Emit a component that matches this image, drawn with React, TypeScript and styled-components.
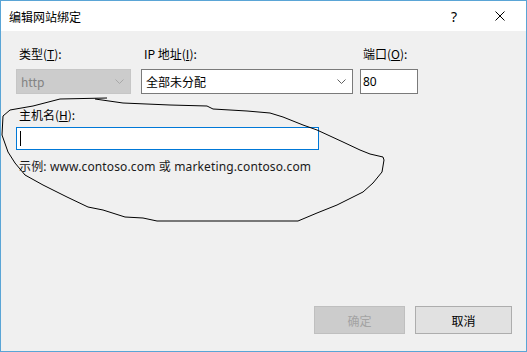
import React from "react";
import styled, { createGlobalStyle } from "styled-components";

const Global = createGlobalStyle`
  html, body { margin: 0; padding: 0; background: #ffffff; }
  body { font-family: "Noto Sans", "Noto Sans CJK SC", sans-serif; font-size: 12px; color: #000; }
`;

const Window = styled.div`
  position: relative;
  width: 527px;
  height: 352px;
  box-sizing: border-box;
  border: 1px solid #5aa5d6;
  display: flex;
  flex-direction: column;
  background: #f0f0f0;
  overflow: hidden;
`;

const TitleBar = styled.div`
  height: 30px;
  background: #ffffff;
  display: flex;
  align-items: center;
  padding-left: 8px;
  padding-right: 3px;
`;

const Title = styled.div`
  flex: 1;
  font-family: "Noto Sans CJK SC", sans-serif;
  font-size: 12px;
  color: #000;
`;

const TitleButton = styled.div<{ $w: number }>`
  width: ${(p) => p.$w}px;
  height: 30px;
  display: flex;
  align-items: center;
  justify-content: center;
  font-family: "Noto Sans", sans-serif;
  font-size: 14px;
  color: #000;
`;

const Body = styled.div`
  flex: 1;
  display: flex;
  flex-direction: column;
  padding: 15px 15px 0 15px;
`;

const FieldRow = styled.div`
  display: flex;
`;

const Field = styled.div<{ $w: number; $ml?: number }>`
  width: ${(p) => p.$w}px;
  margin-left: ${(p) => p.$ml ?? 0}px;
  display: flex;
  flex-direction: column;
`;

const Label = styled.div`
  height: 16px;
  line-height: 16px;
  padding-left: 3px;
  font-family: "Noto Sans CJK SC", sans-serif;
  font-size: 12px;
  color: #000;
  white-space: nowrap;
  margin-bottom: 7px;
`;

const Mn = styled.span`
  text-decoration: underline;
  text-underline-offset: 1px;
`;

const Select = styled.div<{ $disabled?: boolean }>`
  height: 25px;
  box-sizing: border-box;
  border: 1px solid ${(p) => (p.$disabled ? "#c6c6c6" : "#7a7a7a")};
  background: ${(p) => (p.$disabled ? "#cccccc" : "#ffffff")};
  color: ${(p) => (p.$disabled ? "#838383" : "#000")};
  display: flex;
  align-items: center;
  padding: 0 6px 0 4px;
  font-family: "Noto Sans CJK SC", sans-serif;
  font-size: 12px;
`;

const SelectText = styled.span`
  flex: 1;
`;

const TextBox = styled.div<{ $focused?: boolean; $h: number }>`
  height: ${(p) => p.$h}px;
  box-sizing: border-box;
  border: 1px solid ${(p) => (p.$focused ? "#0078d7" : "#7a7a7a")};
  background: #ffffff;
  display: flex;
  align-items: center;
  padding-left: 2px;
  font-family: "Noto Sans", sans-serif;
  font-size: 12px;
`;

const Caret = styled.div`
  width: 1px;
  height: 15px;
  background: #000;
  margin-left: 1px;
`;

const HostBlock = styled.div`
  margin-top: 13px;
  width: 303px;
  display: flex;
  flex-direction: column;
`;

const HostLabel = styled(Label)`
  margin-bottom: 4px;
`;

const Example = styled.div`
  margin-top: 9px;
  padding-left: 3px;
  height: 16px;
  line-height: 16px;
  font-family: "Noto Sans", "Noto Sans CJK SC", sans-serif;
  font-size: 12px;
  letter-spacing: 0.14px;
  color: #1a1a1a;
  white-space: nowrap;
`;

const Footer = styled.div`
  display: flex;
  justify-content: flex-end;
  gap: 10px;
  padding: 0 14px 17px 0;
`;

const Button = styled.div<{ $disabled?: boolean; $w: number }>`
  width: ${(p) => p.$w}px;
  height: 28px;
  box-sizing: border-box;
  border: 1px solid ${(p) => (p.$disabled ? "#bfbfbf" : "#adadad")};
  background: ${(p) => (p.$disabled ? "#cccccc" : "#e1e1e1")};
  color: ${(p) => (p.$disabled ? "#a3a3a3" : "#000")};
  display: flex;
  align-items: center;
  justify-content: center;
  font-family: "Noto Sans CJK SC", sans-serif;
  font-size: 12px;
`;

const Scribble = styled.svg`
  position: absolute;
  left: -1px;
  top: -1px;
  pointer-events: none;
`;

const Chevron = ({ color }: { color: string }) => (
  <svg width="9" height="5" viewBox="0 0 9 5">
    <polyline points="0.5,0.5 4.5,4.5 8.5,0.5" fill="none" stroke={color} strokeWidth="1" />
  </svg>
);

const scribble =
  "107,98 60,99 33,106 10,110 3,116 2,135 8,152 15,163 25,175 43,185 67,197 88,207 103,210 125,217 143,218 157,221 298,221 317,213 337,205 363,192 373,183 382,172 384,160 383,157 370,154 360,150 343,142 317,130 303,125 283,117 270,113 247,111 213,109 207,106 170,105 123,103 95,99";

export default function App() {
  return (
    <>
      <Global />
      <Window>
        <TitleBar>
          <Title>编辑网站绑定</Title>
          <TitleButton $w={46}>?</TitleButton>
          <TitleButton $w={46}>
            <svg width="10" height="10" viewBox="0 0 10 10">
              <path d="M0.5 0.5 L9.5 9.5 M9.5 0.5 L0.5 9.5" stroke="#000" strokeWidth="1" fill="none" />
            </svg>
          </TitleButton>
        </TitleBar>
        <Body>
          <FieldRow>
            <Field $w={115}>
              <Label>
                类型(<Mn>T</Mn>):
              </Label>
              <Select $disabled>
                <SelectText>http</SelectText>
                <Chevron color="#a8a8a8" />
              </Select>
            </Field>
            <Field $w={212} $ml={10}>
              <Label>
                IP 地址(<Mn>I</Mn>):
              </Label>
              <Select>
                <SelectText>全部未分配</SelectText>
                <Chevron color="#606060" />
              </Select>
            </Field>
            <Field $w={58} $ml={7}>
              <Label>
                端口(<Mn>O</Mn>):
              </Label>
              <TextBox $h={25}>80</TextBox>
            </Field>
          </FieldRow>
          <HostBlock>
            <HostLabel>
              主机名(<Mn>H</Mn>):
            </HostLabel>
            <TextBox $focused $h={23}>
              <Caret />
            </TextBox>
          </HostBlock>
          <Example>示例: www.contoso.com 或 marketing.contoso.com</Example>
        </Body>
        <Footer>
          <Button $disabled $w={91}>确定</Button>
          <Button $w={97}>取消</Button>
        </Footer>
        <Scribble width="527" height="352" viewBox="0 0 527 352">
          <polyline points={scribble} fill="none" stroke="#000" strokeWidth="1" />
        </Scribble>
      </Window>
    </>
  );
}
